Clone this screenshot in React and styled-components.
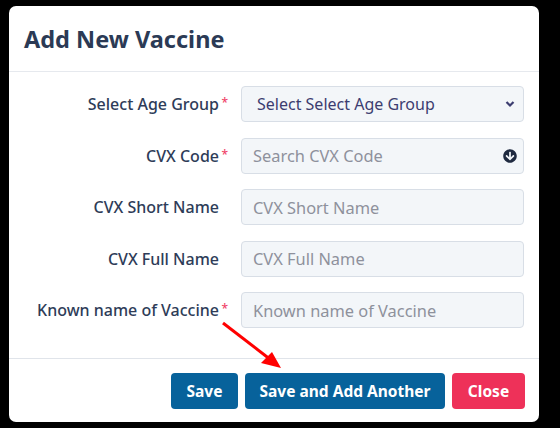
import React from "react";
import styled, { createGlobalStyle } from "styled-components";
import { FaArrowCircleDown } from "react-icons/fa";

const GlobalStyle = createGlobalStyle`
  body {
    margin: 0;
    background: #000;
    font-family: "Noto Sans", "Open Sans", sans-serif;
  }
`;

const Modal = styled.div`
  position: relative;
  box-sizing: border-box;
  margin: 6px 0 0 9px;
  width: 530px;
  height: 416px;
  background: #fff;
  border-radius: 7px;
  display: flex;
  flex-direction: column;
`;

const Header = styled.div`
  height: 65px;
  display: flex;
  align-items: center;
  padding: 0 15px;
  border-bottom: 1px solid #e6e9ee;
`;

const Title = styled.h2`
  margin: 0;
  font-size: 23.5px;
  font-weight: 700;
  color: #2b3a55;
`;

const Body = styled.div`
  display: grid;
  grid-template-columns: 1fr 283px;
  column-gap: 12px;
  row-gap: 15.5px;
  padding: 14px 15px 30px;
  border-bottom: 1px solid #e0e4ea;
`;

const Label = styled.label`
  position: relative;
  display: flex;
  align-items: center;
  justify-content: flex-end;
  padding-right: 10px;
  height: 36px;
  font-size: 16px;
  font-weight: 500;
  color: #2e3c58;
`;

const Star = styled.span`
  position: absolute;
  right: 1px;
  top: 8px;
  color: #f0456a;
  font-size: 12px;
`;

const Field = styled.div`
  position: relative;
  box-sizing: border-box;
  height: 36px;
  background: #f3f6f9;
  border: 1px solid #d8dee6;
  border-radius: 4px;
  display: flex;
  align-items: center;
  font-size: ${(p) => (p.$value ? "16px" : "16.4px")};
  color: ${(p) => (p.$value ? "#3c3d70" : "#8e919c")};
  padding-left: ${(p) => (p.$value ? "15px" : "11px")};
`;

const Icon = styled.span`
  position: absolute;
  right: ${(p) => p.$right}px;
  top: 50%;
  transform: translateY(-50%);
  display: flex;
  color: ${(p) => p.$color};
`;

const Footer = styled.div`
  display: flex;
  justify-content: flex-end;
  gap: 7px;
  padding: 14px 14px 0;
`;

const Button = styled.button`
  height: 36px;
  width: ${(p) => p.$w}px;
  border: none;
  border-radius: 4px;
  background: ${(p) => (p.$danger ? "#ee3159" : "#07629b")};
  color: #fff;
  font-family: inherit;
  font-size: 15.5px;
  font-weight: 700;
  padding: 0;
`;

const Arrow = styled.svg`
  position: absolute;
  left: 210px;
  top: 310px;
  overflow: visible;
`;

const Chevron = () => (
  <svg width="10" height="7" viewBox="0 0 10 7">
    <path d="M1.5 1.5 L5 5 L8.5 1.5" fill="none" stroke="currentColor" strokeWidth="2.2" />
  </svg>
);

const rows = [
  { label: "Select Age Group", req: true, text: "Select Select Age Group", value: true, icon: "chev" },
  { label: "CVX Code", req: true, text: "Search CVX Code", icon: "circle" },
  { label: "CVX Short Name", text: "CVX Short Name" },
  { label: "CVX Full Name", text: "CVX Full Name" },
  { label: "Known name of Vaccine", req: true, text: "Known name of Vaccine" },
];

export default function App() {
  return (
    <>
      <GlobalStyle />
      <Modal>
        <Header>
          <Title>Add New Vaccine</Title>
        </Header>
        <Body>
          {rows.map((r) => (
            <React.Fragment key={r.label}>
              <Label>
                {r.label}
                {r.req && <Star>*</Star>}
              </Label>
              <Field $value={r.value}>
                {r.text}
                {r.icon === "chev" && (
                  <Icon $color="#3c3d70" $right={8}>
                    <Chevron />
                  </Icon>
                )}
                {r.icon === "circle" && (
                  <Icon $color="#1f2a40" $right={6}>
                    <FaArrowCircleDown size={14} />
                  </Icon>
                )}
              </Field>
            </React.Fragment>
          ))}
        </Body>
        <Footer>
          <Button $w={67}>Save</Button>
          <Button $w={200}>Save and Add Another</Button>
          <Button $w={73} $danger>
            Close
          </Button>
        </Footer>
        <Arrow width="80" height="70">
          <line x1="4" y1="7" x2="52" y2="44" stroke="#f00" strokeWidth="3" />
          <polygon points="62,52 42,47 53,36" fill="#f00" />
        </Arrow>
      </Modal>
    </>
  );
}
